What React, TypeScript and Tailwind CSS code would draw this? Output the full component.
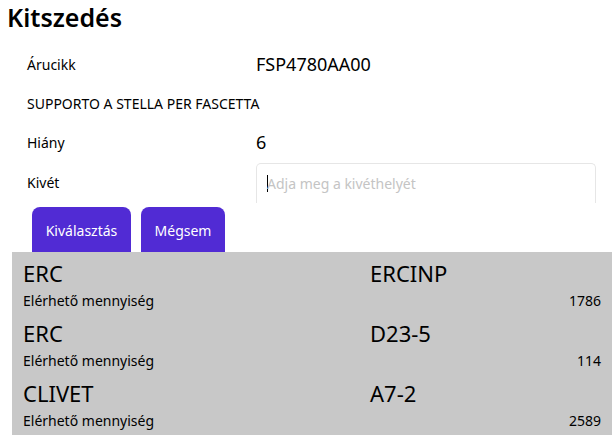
import React from "react";

const items = [
  { name: "ERC", loc: "ERCINP", qty: 1786 },
  { name: "ERC", loc: "D23-5", qty: 114 },
  { name: "CLIVET", loc: "A7-2", qty: 2589 },
];

const App: React.FC = () => {
  return (
    <div className="w-[616px] h-[439px] bg-white text-black font-['Noto_Sans',sans-serif] overflow-hidden">
      <h1 className="pl-[7px] pt-[1px] text-[25px] leading-[32px] font-semibold">
        Kitszedés
      </h1>
      <div className="pl-[27px] pt-[11px]">
        <div className="grid grid-cols-[229px_340px] h-[40px] items-center">
          <span className="text-[14px]">Árucikk</span>
          <span className="text-[18px]">FSP4780AA00</span>
        </div>
        <div className="h-[38px] flex items-center text-[14px]">
          SUPPORTO A STELLA PER FASCETTA
        </div>
        <div className="grid grid-cols-[229px_340px] h-[41px] items-center">
          <span className="text-[14px]">Hiány</span>
          <span className="text-[18px]">6</span>
        </div>
        <div className="grid grid-cols-[229px_340px] h-[40px] items-start">
          <span className="text-[14px] pt-[9px]">Kivét</span>
          <div className="h-[40px] border border-b-0 border-[#e6e6e6] rounded-t-[5px] flex items-center pl-[10px]">
            <span className="w-[1px] h-[17px] bg-black mr-[-1px]" />
            <span className="text-[14px] text-[#c4c4c4]">Adja meg a kivéthelyét</span>
          </div>
        </div>
      </div>
      <div className="flex gap-[10px] pl-[32px] pt-[4px]">
        <button className="w-[99px] h-[45px] pt-[1px] bg-[#512bd4] text-white text-[14px] rounded-t-[8px]">
          Kiválasztás
        </button>
        <button className="w-[84px] h-[45px] pt-[1px] bg-[#512bd4] text-white text-[14px] rounded-t-[8px]">
          Mégsem
        </button>
      </div>
      <div className="ml-[12px] w-[600px] h-[183px] bg-[#c8c8c8] pl-[11px] pr-[11px] pt-[6px]">
        {items.map((it, i) => (
          <div key={i} className="h-[60px]">
            <div className="grid grid-cols-[347px_1fr] text-[22px] leading-[30px]">
              <span>{it.name}</span>
              <span>{it.loc}</span>
            </div>
            <div className="flex justify-between text-[14px] leading-[20px] mt-[3px]">
              <span>Elérhető mennyiség</span>
              <span>{it.qty}</span>
            </div>
          </div>
        ))}
      </div>
    </div>
  );
};

export default App;
